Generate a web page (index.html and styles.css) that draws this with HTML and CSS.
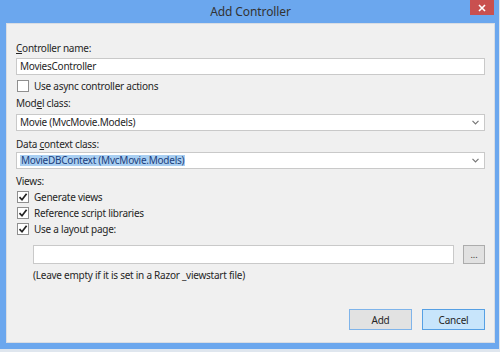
FILE: index.html
```html
<!DOCTYPE html>
<html lang="en">
<head>
  <meta charset="UTF-8" />
  <title>Add Controller</title>
  <link rel="stylesheet" href="styles.css">
</head>
<body>
  <div class="window">
    <div class="titlebar">
      <span></span>
      <div class="title">Add Controller</div>
      <button class="close" aria-label="Close">
        <svg width="8" height="8" viewBox="0 0 8 8"><path d="M1 1L7 7M7 1L1 7" stroke="#fff" stroke-width="1.6"/></svg>
      </button>
    </div>

    <div class="panel">
      <div class="label"><u>C</u>ontroller name:</div>
      <div class="field">MoviesController</div>

      <label class="check first"><span class="box"></span> Use async controller actions</label>

      <div class="label model">Mod<u>e</u>l class:</div>
      <div class="field select">
        <span>Movie (MvcMovie.Models)</span>
        <svg class="arrow" width="7" height="5" viewBox="0 0 7 5"><path d="M0.5 0.8L3.5 3.8L6.5 0.8" fill="none" stroke="#777" stroke-width="1.2"/></svg>
      </div>

      <div class="label data">Data <u>c</u>ontext class:</div>
      <div class="field select">
        <span class="picked">MovieDBContext (MvcMovie.Models)</span>
        <svg class="arrow" width="7" height="5" viewBox="0 0 7 5"><path d="M0.5 0.8L3.5 3.8L6.5 0.8" fill="none" stroke="#777" stroke-width="1.2"/></svg>
      </div>

      <div class="label views">Views:</div>
      <label class="check"><span class="box on"><svg width="10" height="10" viewBox="0 0 10 10"><path d="M1.5 5.2L4 7.8L8.6 1.8" fill="none" stroke="#222" stroke-width="1.7"/></svg></span> Generate views</label>
      <label class="check"><span class="box on"><svg width="10" height="10" viewBox="0 0 10 10"><path d="M1.5 5.2L4 7.8L8.6 1.8" fill="none" stroke="#222" stroke-width="1.7"/></svg></span> Reference script libraries</label>
      <label class="check"><span class="box on"><svg width="10" height="10" viewBox="0 0 10 10"><path d="M1.5 5.2L4 7.8L8.6 1.8" fill="none" stroke="#222" stroke-width="1.7"/></svg></span> Use a layout page:</label>

      <div class="layout-row">
        <div class="field layout"></div>
        <button class="browse">...</button>
      </div>
      <div class="hint">(Leave empty if it is set in a Razor _viewstart file)</div>

      <div class="actions">
        <button class="btn add">Add</button>
        <button class="btn cancel">Cancel</button>
      </div>
    </div>
  </div>
</body>
</html>
```

FILE: styles.css
```css
* {
  box-sizing: border-box;
}
body {
  margin: 0;
  background: #dfe6ee;
  font-family: "Noto Sans", sans-serif;
  font-size: 10px;
  letter-spacing: -0.25px;
  color: #262626;
}

.window {
  width: 499px;
  height: 349px;
  background: #6ba7ee;
  padding: 0 4px 6px 6px;
}

.titlebar {
  height: 23px;
  display: grid;
  grid-template-columns: 1fr auto 1fr;
  align-items: start;
}
.title {
  font-size: 12px;
  letter-spacing: -0.1px;
  color: #333;
  line-height: 24px;
}
.close {
  justify-self: end;
  width: 24px;
  height: 15px;
  margin-right: 1px;
  border: none;
  padding: 0;
  background: #c9504f;
  display: flex;
  align-items: center;
  justify-content: center;
}

.panel {
  height: 320px;
  background: #f0f0f0;
  border: 1px solid #d9dde3;
  padding: 16px 9px 0 9px;
}

.label {
  line-height: 16px;
}
.label.model { margin-top: 1px; }
.label.data { margin-top: 5px; }
.label.views { margin-top: 4px; }

.field {
  height: 17px;
  margin-top: 2px;
  background: #fff;
  border: 1px solid #c9c9c9;
  padding: 0 3px;
  line-height: 15px;
  display: flex;
  align-items: center;
}
.select {
  margin-top: 3px;
  justify-content: space-between;
}
.label.data + .select {
  margin-top: 0;
}
.arrow {
  margin-right: 2px;
}
.picked {
  background: #a9cff2;
  color: #1c3e7c;
  padding: 0 1px;
  line-height: 11px;
}

.check {
  display: flex;
  align-items: center;
  gap: 5px;
  height: 16px;
  padding-left: 1px;
}
.check.first {
  margin-top: 3px;
}
.box {
  width: 12px;
  height: 12px;
  background: #fff;
  border: 1px solid #8f8f8f;
  display: flex;
  align-items: center;
  justify-content: center;
}

.layout-row {
  display: flex;
  gap: 9px;
  margin-top: 8px;
  padding-left: 17px;
}
.field.layout {
  flex: 1;
  height: 19px;
  margin-top: 0;
}
.browse {
  width: 22px;
  height: 19px;
  border: 1px solid #acacac;
  background: #e1e1e1;
  font-family: inherit;
  font-size: 9px;
  line-height: 10px;
  padding: 0;
  color: #333;
}

.hint {
  padding-left: 17px;
  line-height: 16px;
  margin-top: 3px;
}

.actions {
  display: flex;
  justify-content: flex-end;
  gap: 10px;
  margin-top: 26px;
}
.btn {
  width: 63px;
  height: 21px;
  font-family: inherit;
  font-size: 10px;
  letter-spacing: -0.2px;
  color: #262626;
  padding: 0;
}
.add {
  background: #e2e2e2;
  border: 1px solid #7fb4ea;
}
.cancel {
  background: #c8e5fb;
  border: 1px solid #56a0e4;
}
```
